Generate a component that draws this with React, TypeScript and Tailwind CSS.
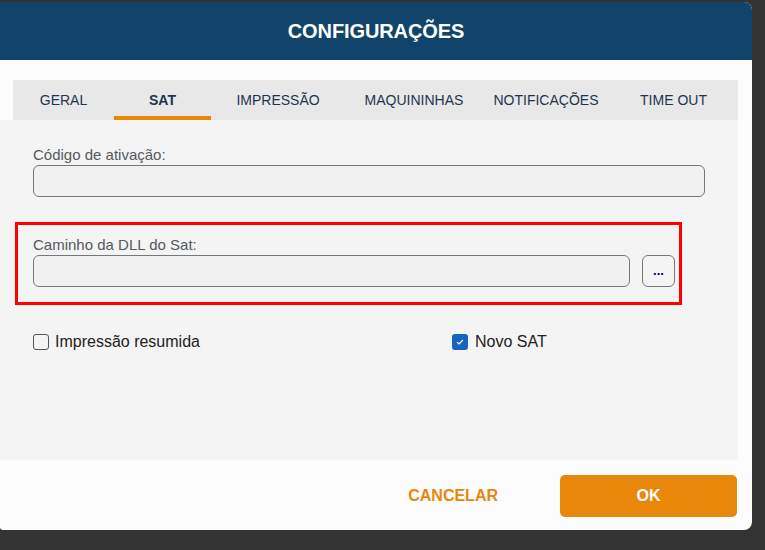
import React from "react";

const tabs: { label: string; w: string; active?: boolean }[] = [
  { label: "GERAL", w: "w-[101px]" },
  { label: "SAT", w: "w-[97px]", active: true },
  { label: "IMPRESSÃO", w: "w-[134px]" },
  { label: "MAQUININHAS", w: "w-[138px]" },
  { label: "NOTIFICAÇÕES", w: "w-[126px]" },
  { label: "TIME OUT", w: "w-[129px]" },
];

export default function App() {
  return (
    <div
      className="w-[765px] h-[550px] bg-[#333333] pt-[2px] overflow-hidden"
      style={{ fontFamily: '"Liberation Sans", Arial, sans-serif' }}
    >
      <div className="w-[752px] h-[528px] bg-[#fcfcfc] rounded-r-[8px] rounded-bl-[3px] overflow-hidden flex flex-col">
        <div className="h-[58px] bg-[#12446b] flex items-center justify-center">
          <span className="text-white font-bold text-[20px] tracking-[-0.1px]">CONFIGURAÇÕES</span>
        </div>
        <div className="pt-[20px]">
          <div className="ml-[13px] w-[725px] h-[40px] bg-[#e8e8e8] flex">
            {tabs.map((t) => (
              <div
                key={t.label}
                className={`${t.w} h-full flex items-center justify-center relative text-[14px] text-[#1e3550] ${t.active ? "font-bold" : ""}`}
              >
                <span>{t.label}</span>
                {t.active && <div className="absolute left-0 right-0 bottom-0 h-[4px] bg-[#e8870a]" />}
              </div>
            ))}
          </div>
          <div className="w-[738px] h-[340px] bg-[#f4f4f4] pt-[26px] pl-[13px]">
            <div className="pl-[20px] text-[15px] text-[#555a60] leading-[18px]">Código de ativação:</div>
            <div className="ml-[20px] mt-[1px] w-[672px] h-[32px] border border-[#777] rounded-[6px] bg-[#f1f1f1]" />
            <div className="ml-[2px] mt-[25px] w-[667px] h-[83px] border-[3px] border-[#ff0000] pt-[11px] pl-[15px]">
              <div className="text-[15px] text-[#555a60] leading-[18px]">Caminho da DLL do Sat:</div>
              <div className="mt-[1px] flex gap-[12px]">
                <div className="w-[597px] h-[32px] border border-[#777] rounded-[6px] bg-[#f1f1f1]" />
                <div className="w-[33px] h-[32px] border border-[#777] rounded-[6px] bg-[#f4f4f4] flex items-center justify-center text-[#000060] font-bold text-[13px] leading-none pb-[2px]">
                  ...
                </div>
              </div>
            </div>
            <div className="mt-[25px] flex items-center pl-[20px] text-[16px] text-[#222]">
              <div className="w-[419px] flex items-center gap-[6px]">
                <div className="w-[16px] h-[16px] border border-[#555] rounded-[3px] bg-[#f4f4f4]" />
                <span>Impressão resumida</span>
              </div>
              <div className="flex items-center gap-[7px]">
                <div className="w-[16px] h-[16px] rounded-[3px] bg-[#1565c0] flex items-center justify-center">
                  <svg width="10" height="8" viewBox="0 0 10 8">
                    <path d="M2 4.2 L4 6 L8 2" stroke="white" strokeWidth="1.1" fill="none" />
                  </svg>
                </div>
                <span>Novo SAT</span>
              </div>
            </div>
          </div>
        </div>
        <div className="flex items-center justify-end pr-[15px] pt-[15px]">
          <span className="text-[#e8870a] font-bold text-[16px] mr-[62px]">CANCELAR</span>
          <div className="w-[177px] h-[42px] bg-[#e8870a] rounded-[5px] flex items-center justify-center text-white font-bold text-[16px]">
            OK
          </div>
        </div>
      </div>
    </div>
  );
}
